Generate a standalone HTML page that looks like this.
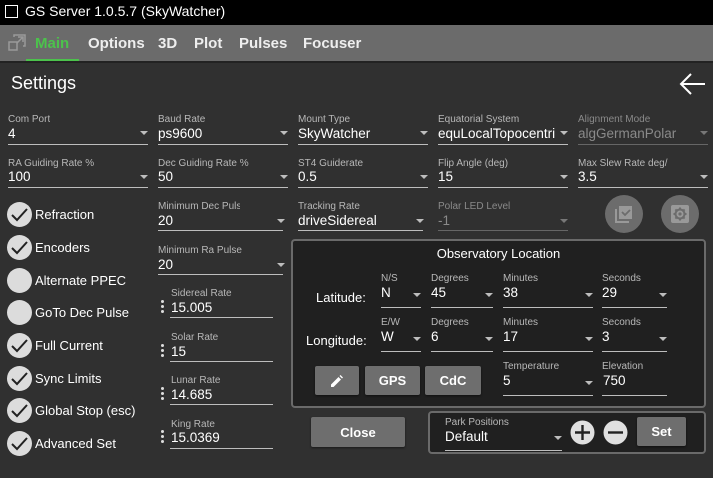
<!DOCTYPE html>
<html><head><meta charset="utf-8"><style>
*{margin:0;padding:0;box-sizing:border-box}
body{width:713px;height:478px;background:#303030;font-family:"Liberation Sans",sans-serif;color:#fff;position:relative;overflow:hidden}
.a{position:absolute}
.lbl{position:absolute;font-size:10px;color:#b8b8b8;white-space:nowrap;overflow:hidden}
.val{position:absolute;font-size:13.5px;color:#fff;white-space:nowrap;margin-top:1px}
.ul{position:absolute;height:1px;background:#bdbdbd}
.arr{position:absolute;width:0;height:0;border-left:4px solid transparent;border-right:4px solid transparent;border-top:4px solid #bdbdbd}
.dis{color:#8a8a8a}
.chk{position:absolute;left:7px;width:25px;height:25px;border-radius:50%;background:#dcdcdc}
.chk svg{position:absolute;left:3px;top:4px}
.cl{position:absolute;left:35px;font-size:13px}
.btn{position:absolute;background:#6e6e6e;border-radius:2px;font-weight:bold;font-size:13px;display:flex;align-items:center;justify-content:center;box-shadow:0 1px 2px rgba(0,0,0,.5)}
.dots{position:absolute;left:161px;width:3px}
.dots i{display:block;width:3px;height:3px;border-radius:50%;background:#ddd;margin-bottom:2px}
.tab{position:absolute;top:35px;font-size:15px;font-weight:bold;color:#eee}
</style></head><body>
<div class="a" style="left:0;top:0;width:713px;height:25px;background:#000"></div>
<div class="a" style="left:5px;top:5px;width:13px;height:13px;border:1.5px solid #fff"></div>
<div class="a" style="left:25px;top:3px;font-size:14px">GS Server 1.0.5.7 (SkyWatcher)</div>
<div class="a" style="left:0;top:25px;width:713px;height:36px;background:#6b6b6b"></div>
<div class="a" style="left:0;top:61px;width:713px;height:2px;background:#222"></div>
<svg class="a" style="left:8px;top:34px" width="18" height="18" viewBox="0 0 18 18" fill="none" stroke="#9a9a9a" stroke-width="1.5"><rect x="1" y="8" width="8" height="8"/><path d="M6 3V1h11v11h-2M9 9l6-6M10 3h5v5"/></svg>
<div class="tab" style="left:35px;color:#4cc24c">Main</div>
<div class="a" style="left:26px;top:59px;width:53px;height:2px;background:#4cc24c"></div>
<div class="tab" style="left:88px">Options</div>
<div class="tab" style="left:158px">3D</div>
<div class="tab" style="left:194px">Plot</div>
<div class="tab" style="left:239px">Pulses</div>
<div class="tab" style="left:303px">Focuser</div>
<div class="a" style="left:11px;top:73px;font-size:18px">Settings</div>
<svg class="a" style="left:678px;top:72px" width="28" height="24" viewBox="0 0 28 24" fill="none" stroke="#fff" stroke-width="2"><path d="M27 12H3M13 2L3 12l10 10"/></svg>

<!-- row1 -->
<div class="lbl" style="left:8px;top:114px">Com Port</div><div class="val" style="left:8px;top:125px">4</div><div class="arr" style="left:140px;top:131px"></div><div class="ul" style="left:8px;top:144px;width:140px"></div>
<div class="lbl" style="left:158px;top:114px">Baud Rate</div><div class="val" style="left:158px;top:125px">ps9600</div><div class="arr" style="left:280px;top:131px"></div><div class="ul" style="left:158px;top:144px;width:130px"></div>
<div class="lbl" style="left:298px;top:114px">Mount Type</div><div class="val" style="left:298px;top:125px">SkyWatcher</div><div class="arr" style="left:420px;top:131px"></div><div class="ul" style="left:298px;top:144px;width:130px"></div>
<div class="lbl" style="left:438px;top:114px">Equatorial System</div><div class="val" style="left:438px;top:125px">equLocalTopocentri</div><div class="arr" style="left:560px;top:131px"></div><div class="ul" style="left:438px;top:144px;width:130px"></div>
<div class="lbl dis" style="left:578px;top:114px">Alignment Mode</div><div class="val dis" style="left:578px;top:125px">algGermanPolar</div><div class="arr" style="left:700px;top:131px;border-top-color:#777"></div><div class="ul" style="left:578px;top:144px;width:130px;background:#666"></div>
<!-- row2 -->
<div class="lbl" style="left:8px;top:158px">RA Guiding Rate %</div><div class="val" style="left:8px;top:168px">100</div><div class="arr" style="left:140px;top:175px"></div><div class="ul" style="left:8px;top:187px;width:140px"></div>
<div class="lbl" style="left:158px;top:158px">Dec Guiding Rate %</div><div class="val" style="left:158px;top:168px">50</div><div class="arr" style="left:280px;top:175px"></div><div class="ul" style="left:158px;top:187px;width:130px"></div>
<div class="lbl" style="left:298px;top:158px">ST4 Guiderate</div><div class="val" style="left:298px;top:168px">0.5</div><div class="arr" style="left:420px;top:175px"></div><div class="ul" style="left:298px;top:187px;width:130px"></div>
<div class="lbl" style="left:438px;top:158px">Flip Angle (deg)</div><div class="val" style="left:438px;top:168px">15</div><div class="arr" style="left:560px;top:175px"></div><div class="ul" style="left:438px;top:187px;width:130px"></div>
<div class="lbl" style="left:578px;top:158px">Max Slew Rate deg/</div><div class="val" style="left:578px;top:168px">3.5</div><div class="arr" style="left:700px;top:175px"></div><div class="ul" style="left:578px;top:187px;width:130px"></div>
<!-- row3 -->
<div class="lbl" style="left:158px;top:201px;width:82px">Minimum Dec Pulse</div><div class="val" style="left:158px;top:212px">20</div><div class="arr" style="left:277px;top:219px"></div><div class="ul" style="left:158px;top:230px;width:125px"></div>
<div class="lbl" style="left:298px;top:201px">Tracking Rate</div><div class="val" style="left:298px;top:212px">driveSidereal</div><div class="arr" style="left:416px;top:219px"></div><div class="ul" style="left:298px;top:230px;width:125px"></div>
<div class="lbl dis" style="left:438px;top:201px">Polar LED Level</div><div class="val dis" style="left:438px;top:212px">-1</div><div class="arr" style="left:560px;top:219px;border-top-color:#777"></div><div class="ul" style="left:438px;top:230px;width:130px;background:#666"></div>
<div class="a" style="left:605px;top:195px;width:38px;height:38px;border-radius:50%;background:#6c6c6c"></div>
<svg class="a" style="left:614px;top:204px" width="20" height="20" viewBox="0 0 20 20"><path d="M2 5v13h13" stroke="#999" stroke-width="2" fill="none"/><rect x="5" y="2" width="13" height="13" fill="#999"/><path d="M8 8l3 3 5-5" stroke="#6c6c6c" stroke-width="1.8" fill="none"/></svg>
<div class="a" style="left:661px;top:195px;width:38px;height:38px;border-radius:50%;background:#6c6c6c"></div>
<svg class="a" style="left:670px;top:204px" width="20" height="20" viewBox="0 0 20 20"><rect x="1" y="1" width="18" height="18" rx="2" fill="#999"/><circle cx="10" cy="10" r="4.5" fill="none" stroke="#6c6c6c" stroke-width="2"/><path d="M10 3.5v3M10 13.5v3M3.5 10h3M13.5 10h3M5.4 5.4l2.1 2.1M12.5 12.5l2.1 2.1M5.4 14.6l2.1-2.1M12.5 7.5l2.1-2.1" stroke="#6c6c6c" stroke-width="2"/><circle cx="10" cy="10" r="1.6" fill="#6c6c6c"/></svg>
<div class="lbl" style="left:158px;top:245px">Minimum Ra Pulse</div><div class="val" style="left:158px;top:256px">20</div><div class="arr" style="left:277px;top:263px"></div><div class="ul" style="left:158px;top:274px;width:125px"></div>

<!-- rates -->
<div class="lbl" style="left:171px;top:288px">Sidereal Rate</div><div class="val" style="left:171px;top:299px">15.005</div><div class="ul" style="left:170px;top:317px;width:103px"></div><div class="dots" style="top:300px"><i></i><i></i><i></i></div>
<div class="lbl" style="left:171px;top:332px">Solar Rate</div><div class="val" style="left:171px;top:343px">15</div><div class="ul" style="left:170px;top:361px;width:103px"></div><div class="dots" style="top:344px"><i></i><i></i><i></i></div>
<div class="lbl" style="left:171px;top:375px">Lunar Rate</div><div class="val" style="left:171px;top:386px">14.685</div><div class="ul" style="left:170px;top:404px;width:103px"></div><div class="dots" style="top:387px"><i></i><i></i><i></i></div>
<div class="lbl" style="left:171px;top:419px">King Rate</div><div class="val" style="left:171px;top:429px">15.0369</div><div class="ul" style="left:170px;top:448px;width:103px"></div><div class="dots" style="top:430px"><i></i><i></i><i></i></div>

<!-- checks -->
<div class="chk" style="top:202px"><svg width="19" height="17" viewBox="0 0 19 17"><path d="M2 9l5 5L17 3" stroke="#222" stroke-width="2" fill="none"/></svg></div><div class="cl" style="top:207px">Refraction</div>
<div class="chk" style="top:235px"><svg width="19" height="17" viewBox="0 0 19 17"><path d="M2 9l5 5L17 3" stroke="#222" stroke-width="2" fill="none"/></svg></div><div class="cl" style="top:240px">Encoders</div>
<div class="chk" style="top:268px"></div><div class="cl" style="top:273px">Alternate PPEC</div>
<div class="chk" style="top:300px"></div><div class="cl" style="top:305px">GoTo Dec Pulse</div>
<div class="chk" style="top:333px"><svg width="19" height="17" viewBox="0 0 19 17"><path d="M2 9l5 5L17 3" stroke="#222" stroke-width="2" fill="none"/></svg></div><div class="cl" style="top:338px">Full Current</div>
<div class="chk" style="top:366px"><svg width="19" height="17" viewBox="0 0 19 17"><path d="M2 9l5 5L17 3" stroke="#222" stroke-width="2" fill="none"/></svg></div><div class="cl" style="top:371px">Sync Limits</div>
<div class="chk" style="top:398px"><svg width="19" height="17" viewBox="0 0 19 17"><path d="M2 9l5 5L17 3" stroke="#222" stroke-width="2" fill="none"/></svg></div><div class="cl" style="top:403px">Global Stop (esc)</div>
<div class="chk" style="top:431px"><svg width="19" height="17" viewBox="0 0 19 17"><path d="M2 9l5 5L17 3" stroke="#222" stroke-width="2" fill="none"/></svg></div><div class="cl" style="top:436px">Advanced Set</div>

<!-- observatory -->
<div class="a" style="left:291px;top:239px;width:415px;height:169px;border:2px solid #6a6a6a;border-radius:4px;background:#202020"></div>
<div class="a" style="left:291px;top:246px;width:415px;text-align:center;font-size:13px">Observatory Location</div>
<div class="a" style="left:316px;top:290px;font-size:13px">Latitude:</div>
<div class="a" style="left:306px;top:333px;font-size:13px">Longitude:</div>
<div class="lbl" style="left:381px;top:273px">N/S</div><div class="val" style="left:381px;top:284px">N</div><div class="arr" style="left:413px;top:293px"></div><div class="ul" style="left:381px;top:307px;width:40px"></div>
<div class="lbl" style="left:431px;top:273px">Degrees</div><div class="val" style="left:431px;top:284px">45</div><div class="arr" style="left:485px;top:293px"></div><div class="ul" style="left:431px;top:307px;width:62px"></div>
<div class="lbl" style="left:503px;top:273px">Minutes</div><div class="val" style="left:503px;top:284px">38</div><div class="arr" style="left:585px;top:293px"></div><div class="ul" style="left:503px;top:307px;width:90px"></div>
<div class="lbl" style="left:602px;top:273px">Seconds</div><div class="val" style="left:602px;top:284px">29</div><div class="arr" style="left:659px;top:293px"></div><div class="ul" style="left:602px;top:307px;width:65px"></div>
<div class="lbl" style="left:381px;top:317px">E/W</div><div class="val" style="left:381px;top:328px">W</div><div class="arr" style="left:413px;top:337px"></div><div class="ul" style="left:381px;top:351px;width:40px"></div>
<div class="lbl" style="left:431px;top:317px">Degrees</div><div class="val" style="left:431px;top:328px">6</div><div class="arr" style="left:485px;top:337px"></div><div class="ul" style="left:431px;top:351px;width:62px"></div>
<div class="lbl" style="left:503px;top:317px">Minutes</div><div class="val" style="left:503px;top:328px">17</div><div class="arr" style="left:585px;top:337px"></div><div class="ul" style="left:503px;top:351px;width:90px"></div>
<div class="lbl" style="left:602px;top:317px">Seconds</div><div class="val" style="left:602px;top:328px">3</div><div class="arr" style="left:659px;top:337px"></div><div class="ul" style="left:602px;top:351px;width:65px"></div>
<div class="btn" style="left:315px;top:366px;width:44px;height:29px"><svg width="12" height="12" viewBox="0 0 12 12"><path d="M0 12v-2.5L7.5 2 10 4.5 2.5 12zM8.5 1l1-1L12 2.5l-1 1z" fill="#fff"/></svg></div>
<div class="btn" style="left:365px;top:366px;width:55px;height:29px">GPS</div>
<div class="btn" style="left:425px;top:366px;width:56px;height:29px">CdC</div>
<div class="lbl" style="left:503px;top:361px">Temperature</div><div class="val" style="left:503px;top:372px">5</div><div class="arr" style="left:585px;top:381px"></div><div class="ul" style="left:503px;top:395px;width:90px"></div>
<div class="lbl" style="left:602px;top:361px">Elevation</div><div class="val" style="left:603px;top:372px">750</div><div class="ul" style="left:602px;top:395px;width:65px"></div>

<div class="btn" style="left:311px;top:417px;width:94px;height:30px">Close</div>
<div class="a" style="left:428px;top:411px;width:278px;height:43px;border:2px solid #6a6a6a;border-radius:4px;background:#202020"></div>
<div class="lbl" style="left:445px;top:417px">Park Positions</div><div class="val" style="left:445px;top:428px">Default</div><div class="arr" style="left:554px;top:436px"></div><div class="ul" style="left:445px;top:450px;width:117px"></div>
<svg class="a" style="left:570px;top:420px" width="25" height="25" viewBox="0 0 25 25"><circle cx="12.5" cy="12.5" r="12" fill="#e0e0e0"/><path d="M12.5 5v15M5 12.5h15" stroke="#222" stroke-width="2.4"/></svg>
<svg class="a" style="left:603px;top:420px" width="25" height="25" viewBox="0 0 25 25"><circle cx="12.5" cy="12.5" r="12" fill="#e0e0e0"/><path d="M5 12.5h15" stroke="#222" stroke-width="2.4"/></svg>
<div class="btn" style="left:637px;top:417px;width:49px;height:29px">Set</div>
</body></html>
